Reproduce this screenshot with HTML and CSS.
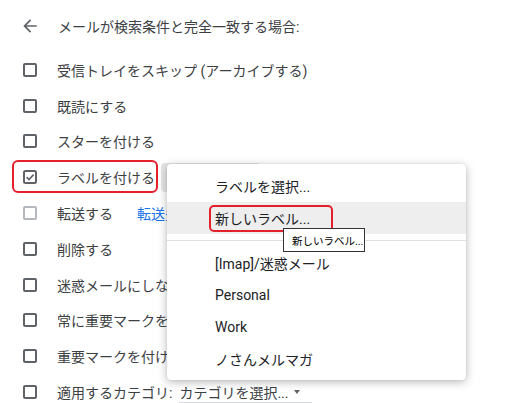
FILE: index.html
```html
<!DOCTYPE html>
<html lang="ja">
<head>
<meta charset="utf-8">
<title>フィルタ</title>
<link rel="stylesheet" href="styles.css">
</head>
<body>
<div class="page">
  <div class="header">
    <svg class="back" viewBox="0 0 24 24" width="20" height="20"><path d="M20 11H7.83l5.59-5.59L12 4l-8 8 8 8 1.41-1.41L7.83 13H20v-2z"/></svg>
    <span>メールが検索条件と完全一致する場合:</span>
  </div>
  <ul class="actions">
    <li class="row"><span class="cb"></span><span>受信トレイをスキップ (アーカイブする)</span></li>
    <li class="row"><span class="cb"></span><span>既読にする</span></li>
    <li class="row"><span class="cb"></span><span>スターを付ける</span></li>
    <li class="row"><span class="cb-checked"><svg viewBox="0 0 14 14" width="14" height="14"><rect x="1" y="1" width="12" height="12" rx="1.5"/><path d="M3.6 7.1 6 9.5 10.6 4.6"/></svg></span><span class="lbl-label">ラベルを付ける:</span><span class="select-stub"></span></li>
    <li class="row"><span class="cb cb-disabled"></span><span>転送する</span><a class="link">転送先アドレスを選択</a></li>
    <li class="row"><span class="cb"></span><span>削除する</span></li>
    <li class="row"><span class="cb"></span><span>迷惑メールにしない</span></li>
    <li class="row"><span class="cb"></span><span>常に重要マークを付ける</span></li>
    <li class="row"><span class="cb"></span><span>重要マークを付けない</span></li>
    <li class="row"><span class="cb"></span><span>適用するカテゴリ:</span><span class="select">カテゴリを選択...<span class="caret"></span></span></li>
  </ul>

  <div class="mark mark-row"></div>

  <div class="menu">
    <div class="item">ラベルを選択...</div>
    <div class="item item-hover">新しいラベル...</div>
    <div class="sep"></div>
    <div class="item">[Imap]/迷惑メール</div>
    <div class="item">Personal</div>
    <div class="item">Work</div>
    <div class="item">ノさんメルマガ</div>
  </div>

  <div class="mark mark-item"></div>
  <div class="tooltip">新しいラベル...</div>
</div>
</body>
</html>
```

FILE: styles.css
```css
html, body {
  margin: 0;
  padding: 0;
  background: #ffffff;
  overflow: hidden;
}

body {
  font-family: Roboto, "Noto Sans CJK JP", "Noto Sans", sans-serif;
  font-size: 14px;
  color: #3c4043;
}

.page {
  position: relative;
  width: 510px;
  height: 403px;
}

.header {
  height: 52px;
  display: flex;
  align-items: center;
  padding-left: 20px;
  gap: 18px;
}

.back {
  fill: #5f6368;
  flex: none;
}

.actions {
  list-style: none;
  margin: 0;
  padding: 0;
}

.row {
  height: 35.8px;
  display: flex;
  align-items: center;
  padding-left: 23px;
  white-space: nowrap;
}

.cb {
  width: 14px;
  height: 14px;
  box-sizing: border-box;
  border: 2px solid #5f6368;
  border-radius: 2px;
  margin-right: 20px;
  flex: none;
}

.cb-disabled {
  border-color: #b4b7bb;
}

.cb-checked {
  width: 14px;
  height: 14px;
  margin-right: 20px;
  flex: none;
  display: flex;
}

.cb-checked rect {
  fill: none;
  stroke: #5f6368;
  stroke-width: 2;
}

.cb-checked path {
  fill: none;
  stroke: #5f6368;
  stroke-width: 1.6;
}

.select-stub {
  margin-left: 3px;
  width: 100px;
  height: 29px;
  border-radius: 4px;
  background: #e6e6e6;
  flex: none;
}

.link {
  margin-left: 24px;
  color: #1a73e8;
  text-decoration: none;
}

.select {
  margin-left: 7px;
  width: 133px;
  height: 20px;
  display: flex;
  align-items: center;
  border-bottom: 1px solid #dadce0;
}

.caret {
  margin-left: 6px;
  width: 0;
  height: 0;
  border-left: 3.5px solid transparent;
  border-right: 3.5px solid transparent;
  border-top: 4px solid #5f6368;
}

.mark {
  position: absolute;
  box-sizing: border-box;
  border: 2px solid #e4202b;
  border-radius: 6px;
}

.mark-row {
  left: 12px;
  top: 160px;
  width: 146px;
  height: 33px;
}

.menu {
  position: absolute;
  left: 167px;
  top: 164px;
  width: 299px;
  padding: 6px 0 5px;
  background: #ffffff;
  border-radius: 4px;
  box-shadow: 0 2px 10px rgba(0, 0, 0, 0.28), 0 0 2px rgba(0, 0, 0, 0.1);
  color: #202124;
}

.item {
  height: 32px;
  display: flex;
  align-items: center;
  padding-left: 48px;
  white-space: nowrap;
}

.item-hover {
  background: #eeeeee;
}

.sep {
  height: 1px;
  background: #e0e0e0;
  margin: 6px 0;
}

.mark-item {
  left: 209px;
  top: 205px;
  width: 124px;
  height: 27px;
  border-radius: 5px;
}

.tooltip {
  position: absolute;
  left: 283px;
  top: 228px;
  width: 82px;
  height: 24px;
  box-sizing: border-box;
  border: 1px solid #333333;
  background: #ffffff;
  color: #000000;
  font-size: 10.5px;
  display: flex;
  align-items: center;
  padding-left: 8px;
  white-space: nowrap;
}
```
